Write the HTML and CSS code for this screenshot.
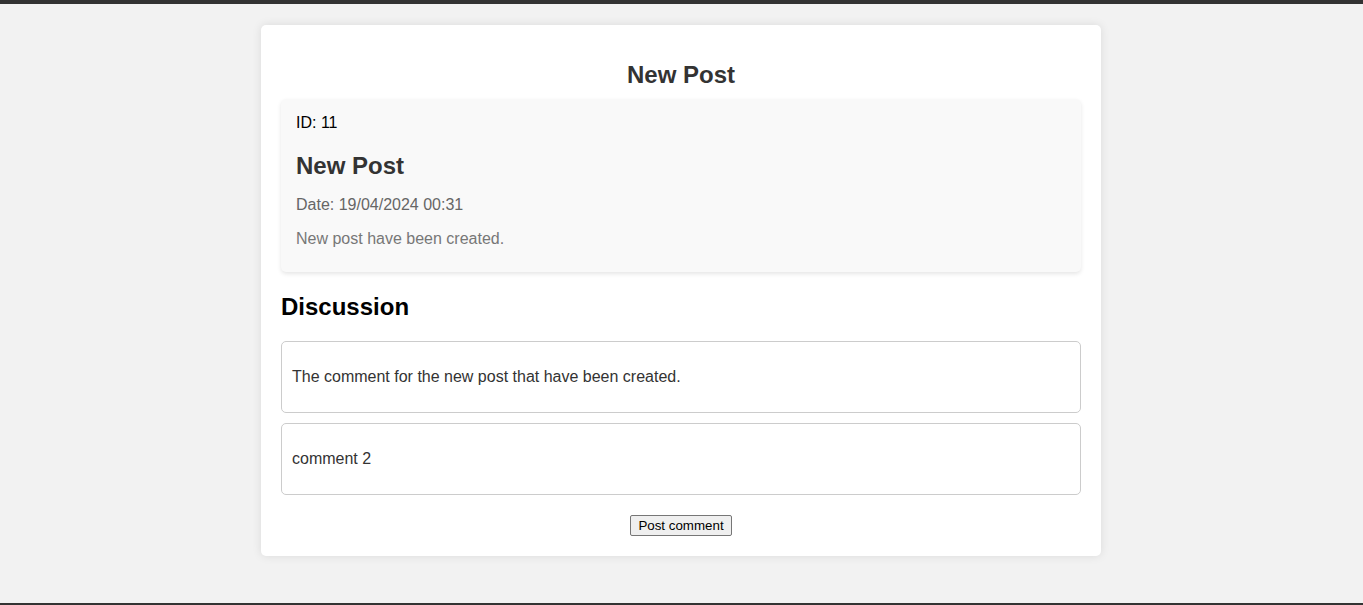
FILE: index.html
```html
<!DOCTYPE html>
<html lang="en">
<head>
<meta charset="utf-8">
<title>New Post</title>
<link rel="stylesheet" href="styles.css">
</head>
<body>
<main class="card">
  <h2 class="page-title">New Post</h2>
  <section class="post">
    <p class="post-id">ID: 11</p>
    <h3 class="post-title">New Post</h3>
    <p class="post-date">Date: 19/04/2024 00:31</p>
    <p class="post-body">New post have been created.</p>
  </section>
  <h2 class="discussion-title">Discussion</h2>
  <div class="comments">
    <div class="comment"><p>The comment for the new post that have been created.</p></div>
    <div class="comment"><p>comment 2</p></div>
  </div>
  <div class="actions"><button class="post-btn" type="button">Post comment</button></div>
</main>
</body>
</html>
```
FILE: styles.css
```css
* { box-sizing: border-box; }
html { background: #f2f2f2; }
body {
  margin: 0;
  min-height: 100vh;
  background: #f2f2f2;
  border-top: 4px solid #333;
  border-bottom: 2px solid #333;
  padding: 21px 1px 0 0;
  font-family: "Liberation Sans", Arial, sans-serif;
  font-size: 16px;
  color: #000;
}
.card {
  width: 840px;
  margin: 0 auto;
  background: #fff;
  border-radius: 5px;
  padding: 20px;
  box-shadow: 0 0 10px rgba(0,0,0,0.1);
}
.page-title {
  margin: 16px 0 10px;
  font-size: 24px;
  font-weight: bold;
  color: #333;
  text-align: center;
}
.post {
  background: #f9f9f9;
  border-radius: 5px;
  padding: 15px;
  box-shadow: 0 2px 4px rgba(0,0,0,0.1);
}
.post p { margin: 0; }
.post-id { color: #000; }
.post-title {
  margin: 20px 0 16px;
  font-size: 24px;
  font-weight: bold;
  color: #333;
}
.post-date { color: #666; }
.post-body { color: #777; margin-top: 16px !important; margin-bottom: 9px !important; }
.discussion-title {
  margin: 21px 0 20px;
  font-size: 24px;
  font-weight: bold;
  color: #000;
}
.comments { display: flex; flex-direction: column; gap: 10px; }
.comment {
  border: 1px solid #ccc;
  border-radius: 5px;
  padding: 10px;
  color: #333;
}
.comment p { margin: 16px 0; }
.actions { text-align: center; margin-top: 20px; line-height: 0; }
.post-btn {
  font: 13.333px "Liberation Sans", Arial, sans-serif;
  color: #000;
  background: #efefef;
  border: 1px solid #767676;
  border-radius: 2px;
  padding: 2px 7px;
  line-height: normal;
}
```
